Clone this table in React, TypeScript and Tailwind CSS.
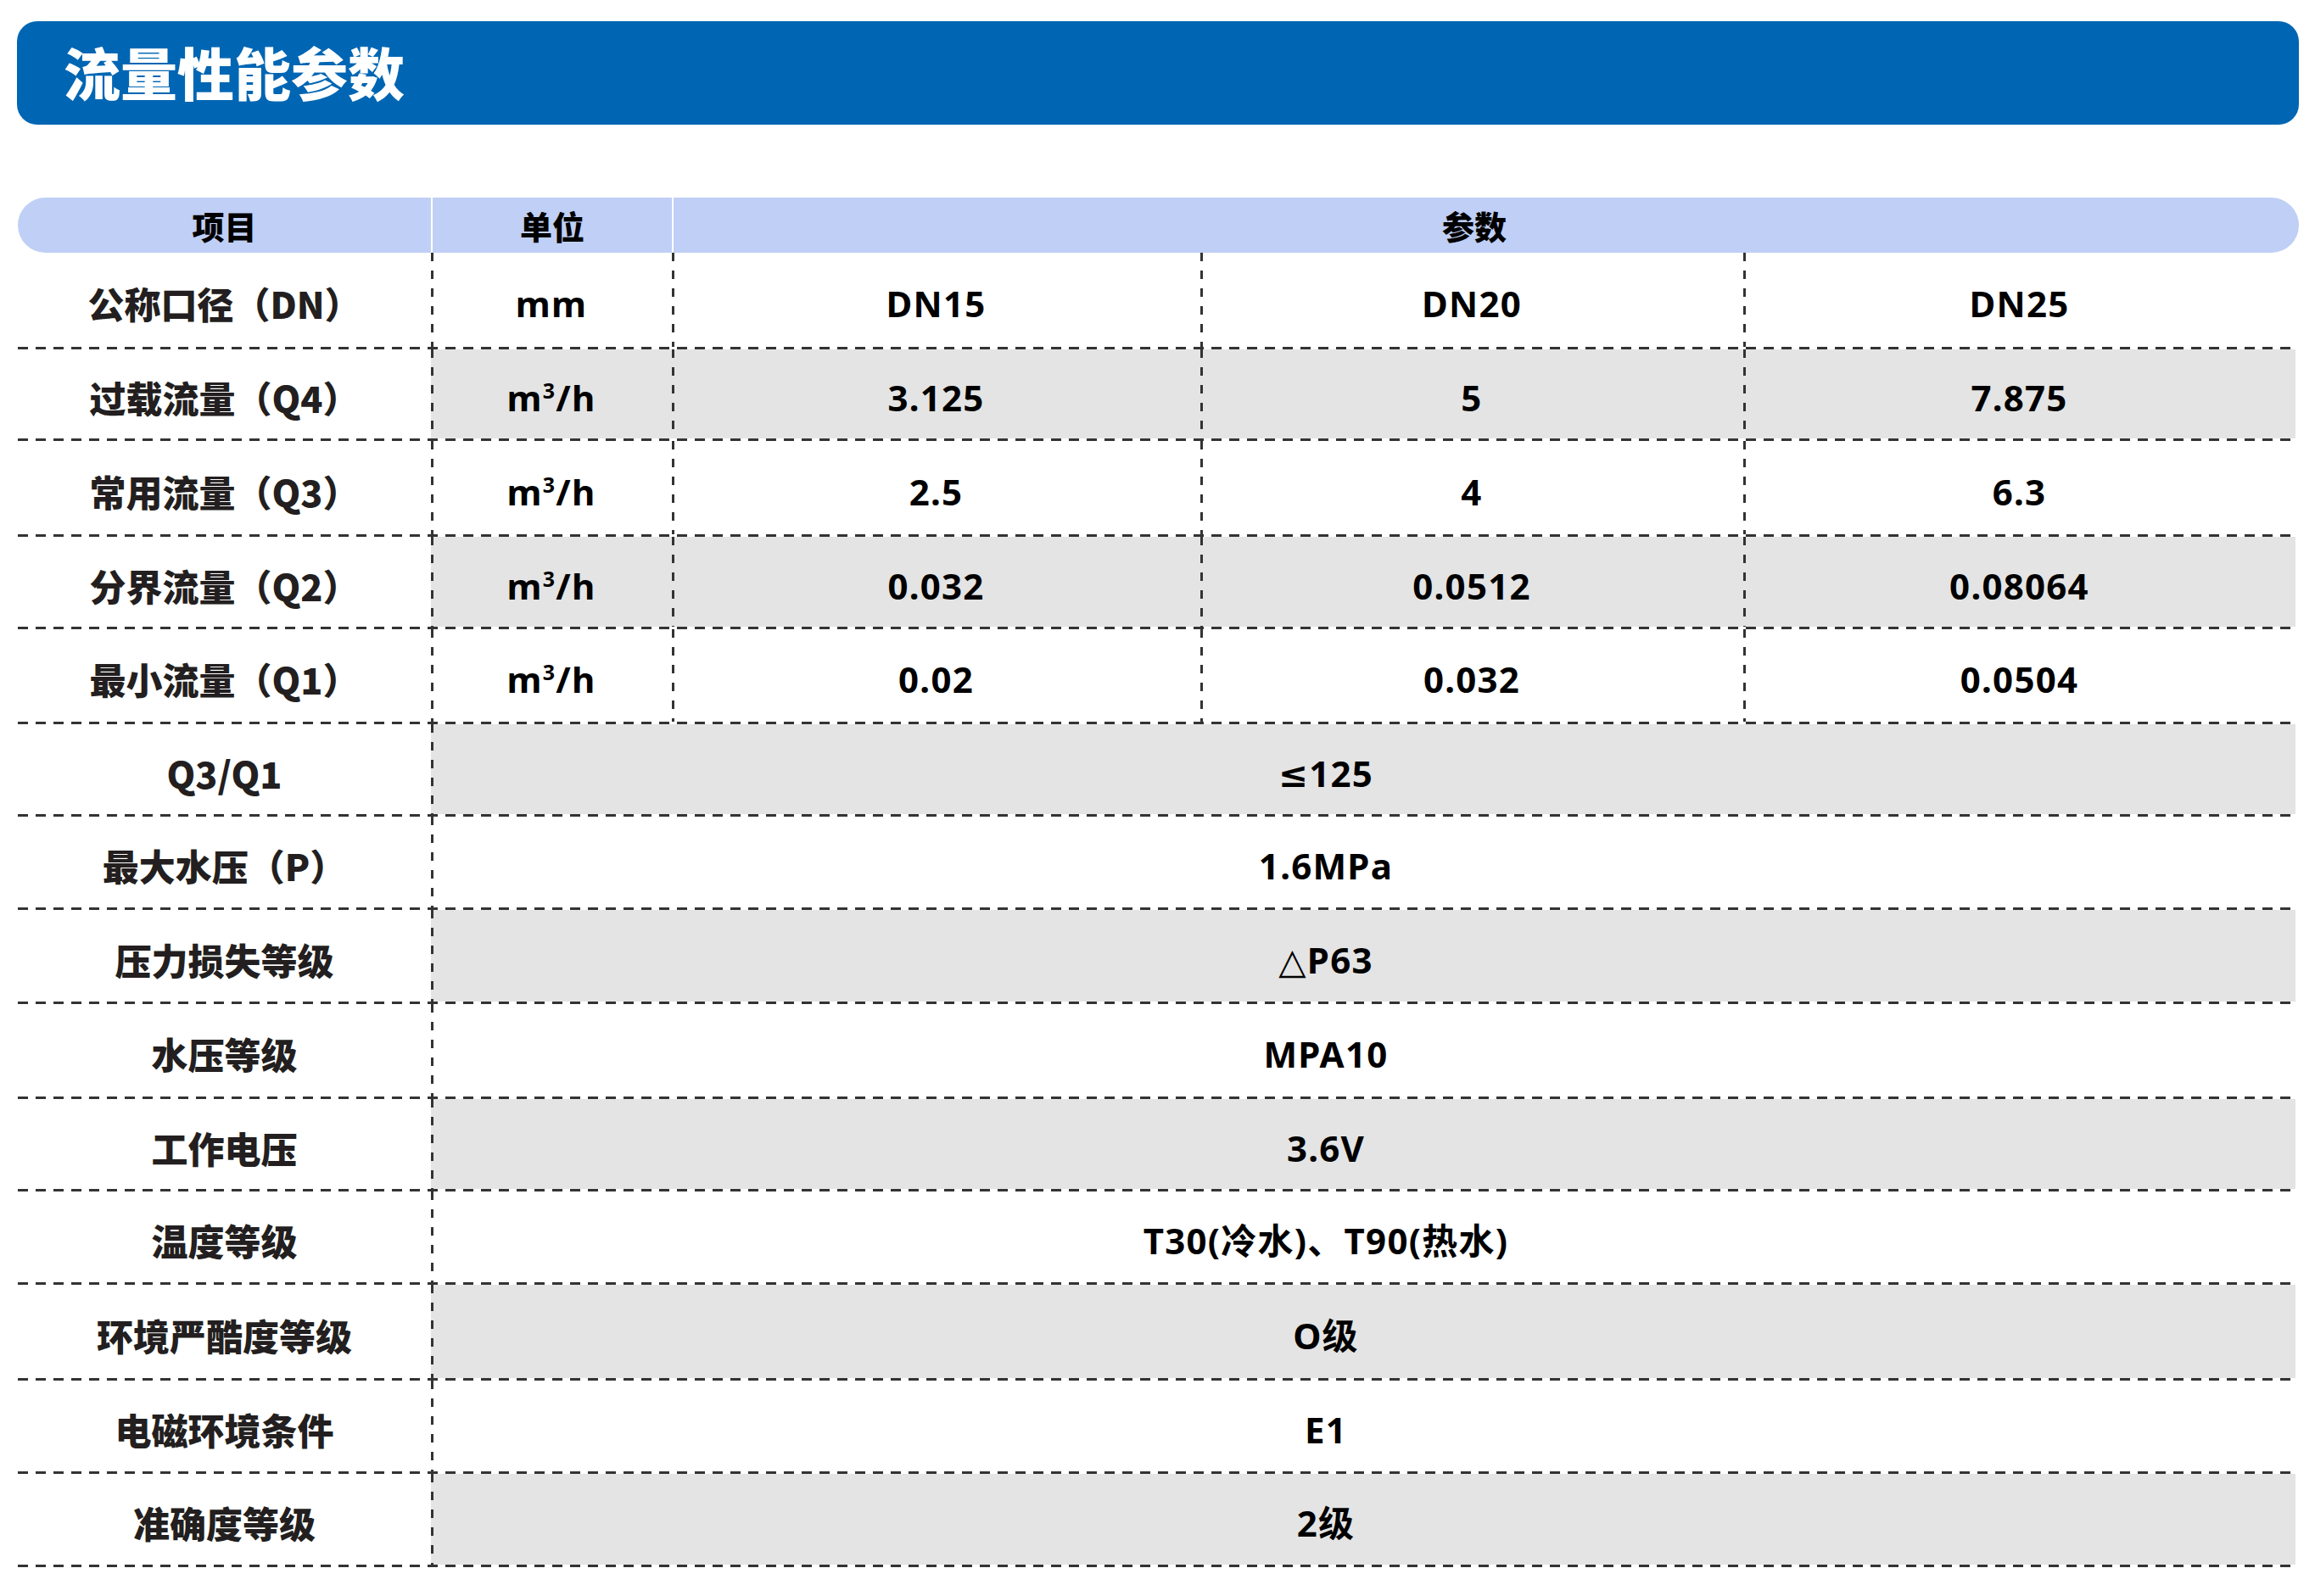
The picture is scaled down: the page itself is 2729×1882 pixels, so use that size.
const LABEL = "font-['Noto_Sans_CJK_SC','Noto_Sans',sans-serif]";
const VALUE = "font-['Noto_Sans','DejaVu_Sans','Noto_Sans_CJK_SC',sans-serif]";

// left-edge dashed divider, drawn as background so the cell keeps its fill
const vline =
  'bg-[repeating-linear-gradient(to_bottom,#333_0_10px,transparent_10px_21px)] bg-no-repeat bg-[length:3px_100%] bg-left';

type Row = {
  label: string;
  h: string;
  shaded: boolean;
  unit?: string;
  values?: [string, string, string];
  merged?: string;
};

const rows: Row[] = [
  { label: '公称口径（DN）', h: 'h-[114px]', shaded: false, unit: 'mm', values: ['DN15', 'DN20', 'DN25'] },
  { label: '过载流量（Q4）', h: 'h-[108px]', shaded: true, unit: 'm3h', values: ['3.125', '5', '7.875'] },
  { label: '常用流量（Q3）', h: 'h-[113px]', shaded: false, unit: 'm3h', values: ['2.5', '4', '6.3'] },
  { label: '分界流量（Q2）', h: 'h-[109px]', shaded: true, unit: 'm3h', values: ['0.032', '0.0512', '0.08064'] },
  { label: '最小流量（Q1）', h: 'h-[112px]', shaded: false, unit: 'm3h', values: ['0.02', '0.032', '0.0504'] },
  { label: 'Q3/Q1', h: 'h-[109px]', shaded: true, merged: '≤125' },
  { label: '最大水压（P）', h: 'h-[110px]', shaded: false, merged: '1.6MPa' },
  { label: '压力损失等级', h: 'h-[111px]', shaded: true, merged: '△P63' },
  { label: '水压等级', h: 'h-[112px]', shaded: false, merged: 'MPA10' },
  { label: '工作电压', h: 'h-[109px]', shaded: true, merged: '3.6V' },
  { label: '温度等级', h: 'h-[110px]', shaded: false, merged: 'T30(冷水)、T90(热水)' },
  { label: '环境严酷度等级', h: 'h-[113px]', shaded: true, merged: 'O级' },
  { label: '电磁环境条件', h: 'h-[110px]', shaded: false, merged: 'E1' },
  { label: '准确度等级', h: 'h-[110px]', shaded: true, merged: '2级' },
];

const Unit = ({ unit }: { unit: string }) =>
  unit === 'm3h' ? (
    <span>
      m<span className="text-[25px] relative -top-[15px]">3</span>/h
    </span>
  ) : (
    <span>{unit}</span>
  );

const BodyRow = ({ row }: { row: Row }) => {
  const fill = row.shaded ? 'bg-[#e4e4e4]' : 'bg-white';
  const cell = `flex items-center justify-center pt-[8px] ${fill} ${vline}`;
  return (
    <div className={`flex flex-col ${row.h}`}>
      <div className="flex flex-1">
        <div
          className={`w-[487px] flex items-center justify-center pt-[8px] text-[43px] font-black text-[#231f20] ${LABEL}`}
        >
          {row.label}
        </div>
        {row.merged ? (
          <div className={`w-[2198px] pr-[88px] text-[42px] font-bold text-black tracking-[0.03em] ${VALUE} ${cell}`}>
            {row.merged}
          </div>
        ) : (
          <div className={`flex text-[42px] font-bold text-black tracking-[0.03em] ${VALUE}`}>
            <div className={`w-[284px] ${cell}`}>
              <Unit unit={row.unit ?? ''} />
            </div>
            <div className={`w-[623px] ${cell}`}>{row.values?.[0]}</div>
            <div className={`w-[640px] ${cell}`}>{row.values?.[1]}</div>
            <div className={`w-[651px] ${cell}`}>{row.values?.[2]}</div>
          </div>
        )}
      </div>
      <div className="h-[3px] w-[2685px] bg-[repeating-linear-gradient(to_right,#333_0_12px,transparent_12px_21px)]" />
    </div>
  );
};

export default function App() {
  return (
    <div className="w-[2729px] h-[1882px] bg-white pt-[25px] pl-[20px]">
      <div className="w-[2690px] h-[122px] rounded-[24px] bg-[#0066b3] flex items-center pl-[55px] pb-[6px]">
        <h1 className={`text-[67px] font-black text-white leading-none ${LABEL}`}>流量性能参数</h1>
      </div>

      <div className="mt-[86px] ml-[1px] w-[2689px]">
        <div
          className={`h-[65px] rounded-full bg-[#bfcff5] flex text-[38px] font-black text-black ${LABEL}`}
        >
          <div className="w-[487px] flex items-center justify-center">项目</div>
          <div className="w-[284px] flex items-center justify-center border-l-2 border-white">单位</div>
          <div className="flex-1 flex items-center justify-center border-l-2 border-white pr-[28px]">参数</div>
        </div>

        {rows.map((row) => (
          <BodyRow key={row.label} row={row} />
        ))}
      </div>
    </div>
  );
}
